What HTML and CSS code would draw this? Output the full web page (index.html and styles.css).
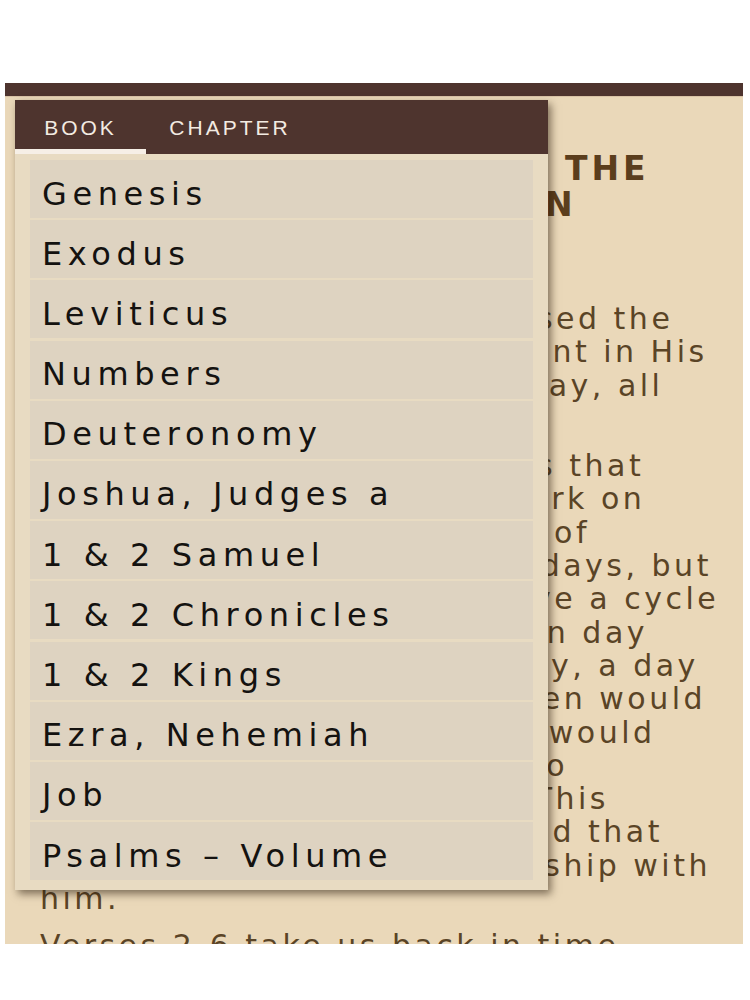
FILE: index.html
```html
<!DOCTYPE html>
<html lang="en">
<head>
  <meta charset="UTF-8">
  <title>Reader - Genesis</title>
  <link rel="stylesheet" href="styles.css">
</head>

<body>

<div class="app">
  <div class="toolbar"></div>

  <div class="reader">
    <h2>THE SEVENTH DAY AND THE<br>CREATION OF EACH MAN</h2>

    <p>God finally rested and blessed the<br>
    seventh day, showing content in His<br>
    completed works. On that day, all<br>
    was very good.</p>

    <p>The seventh day reminds us that<br>
    God did not intend us to work on<br>
    every day of their lives, all of<br>
    our life without rest seven days, but<br>
    He designed that we all have a cycle<br>
    of work and then, on a given day<br>
    of rest; this was His own day, a day<br>
    on which all of God's children would<br>
    set aside their labours and would<br>
    turn all their hearts again to<br>
    Him in worship and honor. This<br>
    was the reason God ordained that<br>
    all men should enjoy fellowship with<br>
    him.</p>

    <p>Verses 2-6 take us back in time</p>
  </div>

  <!-- book / chapter picker -->
  <div class="picker">
    <div class="tabs">
      <a class="tab active" href="#">BOOK</a>
      <a class="tab" href="#">CHAPTER</a>
    </div>
    <ul class="book-list">
      <li>Genesis</li>
      <li>Exodus</li>
      <li>Leviticus</li>
      <li>Numbers</li>
      <li>Deuteronomy</li>
      <li>Joshua, Judges a</li>
      <li>1 &amp; 2 Samuel</li>
      <li>1 &amp; 2 Chronicles</li>
      <li>1 &amp; 2 Kings</li>
      <li>Ezra, Nehemiah</li>
      <li>Job</li>
      <li>Psalms &ndash; Volume</li>
    </ul>
  </div>
</div>

</body>
</html>
```

FILE: styles.css
```css
* {
  margin: 0;
  padding: 0;
  box-sizing: border-box;
}

body {
  background-color: #fff;
  font-family: 'DejaVu Sans', sans-serif;
}

.app {
  position: relative;
  margin: 83px 0 0 5px;
  width: 738px;
  height: 861px;
  overflow: hidden;
  background-color: #ead8b9;
}

.toolbar {
  height: 14px;
  background-color: #4e342e;
  border-bottom: 1px solid #d9c3a6;
}

.reader {
  padding: 54px 20px 0 35px;
  color: #5a4426;
}

.reader h2 {
  font-size: 33px;
  line-height: 36px;
  font-weight: bold;
  letter-spacing: 4px;
  color: #5b3e1d;
  margin-bottom: 79px;
  white-space: nowrap;
}

.reader p {
  font-size: 30px;
  line-height: 33.3px;
  letter-spacing: 3.5px;
  margin-bottom: 14px;
  white-space: nowrap;
}

/* popup */
.picker {
  position: absolute;
  top: 17px;
  left: 10px;
  width: 533px;
  background-color: #e8dbc2;
  box-shadow: 3px 4px 8px rgba(40, 25, 10, 0.55);
}

.tabs {
  display: flex;
  height: 54px;
  background-color: #4e342e;
}

.tab {
  width: 131px;
  display: flex;
  align-items: center;
  justify-content: center;
  color: #f3ebe2;
  text-decoration: none;
  font-family: 'Liberation Sans', sans-serif;
  font-size: 21px;
  letter-spacing: 3px;
  border-bottom: 5px solid transparent;
  padding-top: 7px;
}

.tab.active {
  border-bottom-color: #f6efe6;
}

.tab + .tab {
  width: 168px;
}

.book-list {
  list-style: none;
  padding: 6px 15px 8px;
}

.book-list li {
  height: 58px;
  margin-bottom: 2.2px;
  padding: 9px 0 0 12px;
  display: flex;
  align-items: center;
  background-color: #ded3c1;
  color: #141210;
  font-size: 32px;
  letter-spacing: 5.6px;
  white-space: nowrap;
  overflow: hidden;
}
```
